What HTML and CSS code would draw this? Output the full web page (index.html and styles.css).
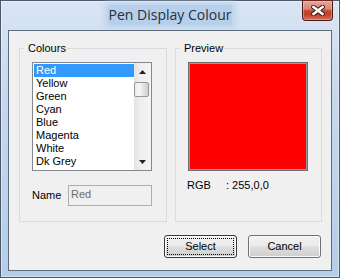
FILE: index.html
```html
<!DOCTYPE html>
<html>
<head>
<meta charset="utf-8">
<title>Pen Display Colour</title>
<link rel="stylesheet" href="styles.css">
</head>
<body>
<div class="window">
  <div class="titlebar">
    <div class="title">Pen Display Colour</div>
    <button class="close" aria-label="Close">
      <svg width="14" height="11" viewBox="0 0 14 11">
        <path d="M2.5 2 L11.5 9 M11.5 2 L2.5 9" stroke="#3a1a16" stroke-width="4.6" stroke-linecap="square" fill="none"/>
        <path d="M2.5 2 L11.5 9 M11.5 2 L2.5 9" stroke="#ffffff" stroke-width="2.6" stroke-linecap="square" fill="none"/>
      </svg>
    </button>
  </div>
  <div class="client">
    <div class="groups">
      <fieldset class="group">
        <legend>Colours</legend>
        <div class="listbox">
          <ul class="items">
            <li class="sel">Red</li>
            <li>Yellow</li>
            <li>Green</li>
            <li>Cyan</li>
            <li>Blue</li>
            <li>Magenta</li>
            <li>White</li>
            <li>Dk Grey</li>
          </ul>
          <div class="scrollbar">
            <div class="sb-btn"><svg width="7" height="4" viewBox="0 0 7 4"><path d="M3.5 0 L7 4 L0 4 Z" fill="#222"/></svg></div>
            <div class="thumb"></div>
            <div class="track"></div>
            <div class="sb-btn"><svg width="7" height="4" viewBox="0 0 7 4"><path d="M0 0 L7 0 L3.5 4 Z" fill="#222"/></svg></div>
          </div>
        </div>
        <div class="field-row">
          <span class="field-label">Name</span>
          <div class="textbox">Red</div>
        </div>
      </fieldset>
      <fieldset class="group">
        <legend>Preview</legend>
        <div class="swatch" style="background:#ff0000"></div>
        <div class="rgb-row">
          <span class="rgb-label">RGB</span>
          <span class="rgb-value">: 255,0,0</span>
        </div>
      </fieldset>
    </div>
    <div class="buttons">
      <button class="btn default"><span class="focus">Select</span></button>
      <button class="btn"><span class="plain">Cancel</span></button>
    </div>
  </div>
</div>
</body>
</html>
```

FILE: styles.css
```css
* { box-sizing: border-box; }
html, body { margin: 0; padding: 0; }
body {
  width: 340px;
  height: 278px;
  overflow: hidden;
  font-family: "Liberation Sans", Arial, sans-serif;
  font-size: 11px;
  line-height: 13px;
  color: #000;
  background: #fff;
}
.window {
  width: 340px;
  height: 278px;
  border: 1px solid #4c5868;
  background: linear-gradient(180deg, #d9e5f4 0%, #c6d8ee 35%, #b4cdea 100%);
  box-shadow: inset 0 0 0 1px rgba(255,255,255,0.45);
  display: flex;
  flex-direction: column;
  padding: 0 7px 6px 7px;
}
.titlebar {
  height: 29px;
  display: grid;
  grid-template-columns: 1fr auto 1fr;
  align-items: start;
}
.title {
  grid-column: 2;
  margin-top: 4px;
  height: 20px;
  padding: 0 1px;
  font-family: "Open Sans", "Noto Sans", sans-serif;
  font-size: 14px;
  line-height: 20px;
  color: #26303e;
  background: #b7cfea;
  box-shadow: 0 0 6px 3px rgba(183,207,234,0.8);
  white-space: nowrap;
}
.close {
  grid-column: 3;
  justify-self: end;
  width: 31px;
  height: 21px;
  margin: -1px -1px 0 0;
  padding: 0;
  border: 1px solid #4a1c16;
  border-top-color: #6a2a22;
  border-radius: 0 0 4px 4px;
  background: linear-gradient(180deg, #e7a597 0%, #d98a7b 40%, #c44a35 52%, #c0402c 70%, #d8705c 100%);
  box-shadow: inset 0 0 0 1px rgba(255,220,210,0.35);
  display: flex;
  align-items: center;
  justify-content: center;
}
.close svg { display: block; }
.client {
  flex: 1;
  border: 1px solid #5d6b7d;
  background: #f0f0f0;
  padding: 11px 9px 12px 10px;
  display: flex;
  flex-direction: column;
}
.groups {
  display: grid;
  grid-template-columns: 148px 147px;
  column-gap: 8px;
}
.group {
  margin: 0;
  min-width: 0;
  padding: 7px 0 15px 12px;
  border: 1px solid #d8dcdf;
}
.group legend {
  margin-left: -8px;
  padding: 0 1px 0 4px;
  line-height: 13px;
}
.listbox {
  width: 120px;
  height: 109px;
  border: 1px solid #828790;
  background: #fff;
  display: flex;
}
.items {
  list-style: none;
  margin: 0;
  padding: 1px 0 0 1px;
  width: 101px;
  overflow: hidden;
}
.items li {
  height: 13px;
  line-height: 13px;
  padding-left: 2px;
  white-space: nowrap;
}
.items li.sel {
  background: #3399ff;
  color: #fff;
}
.scrollbar {
  width: 17px;
  display: flex;
  flex-direction: column;
  background: linear-gradient(90deg, #e3e3e3 0%, #efefef 40%, #f4f4f4 100%);
}
.sb-btn {
  height: 17px;
  display: flex;
  align-items: center;
  justify-content: center;
}
.sb-btn svg { display: block; margin-left: -1px; }
.thumb {
  margin: 2px 2px 0 0;
  height: 15px;
  width: 15px;
  border: 1px solid #979797;
  border-radius: 2px;
  background: linear-gradient(90deg, #eaeaea 0%, #f6f6f6 35%, #dcdcdc 75%, #cfcfcf 100%);
}
.track { flex: 1; }
.field-row {
  margin-top: 14px;
  height: 21px;
  display: flex;
  align-items: center;
}
.field-label {
  width: 36px;
}
.textbox {
  width: 84px;
  height: 21px;
  border: 1px solid #abadb3;
  background: #f0f0f0;
  color: #6d6d6d;
  padding: 2px 2px 0 2px;
  line-height: 13px;
}
.swatch {
  width: 120px;
  height: 109px;
  border: 1px solid #6c6c6c;
  box-shadow: inset 0 0 0 1px #9a9a9a;
}
.rgb-row {
  margin-top: 8px;
  display: flex;
  line-height: 13px;
}
.rgb-label { width: 39px; margin-left: -1px; }
.buttons {
  margin-top: 13px;
  display: flex;
  justify-content: flex-end;
  column-gap: 11px;
  padding-right: 1px;
}
.btn {
  width: 73px;
  height: 23px;
  padding: 2px;
  border: 1px solid #707070;
  border-radius: 3px;
  background: linear-gradient(180deg, #f2f2f2 0%, #ebebeb 48%, #dddddd 52%, #cfcfcf 100%);
  box-shadow: inset 0 0 0 1px #fbfbfb;
  font-family: "Liberation Sans", Arial, sans-serif;
  font-size: 11px;
  color: #000;
  display: flex;
}
.btn.default { border-color: #3a3a3a; }
.btn .focus, .btn .plain {
  flex: 1;
  display: flex;
  align-items: center;
  justify-content: center;
  line-height: 13px;
  border: 1px dotted transparent;
}
.btn .focus { border-color: #000; }
```
